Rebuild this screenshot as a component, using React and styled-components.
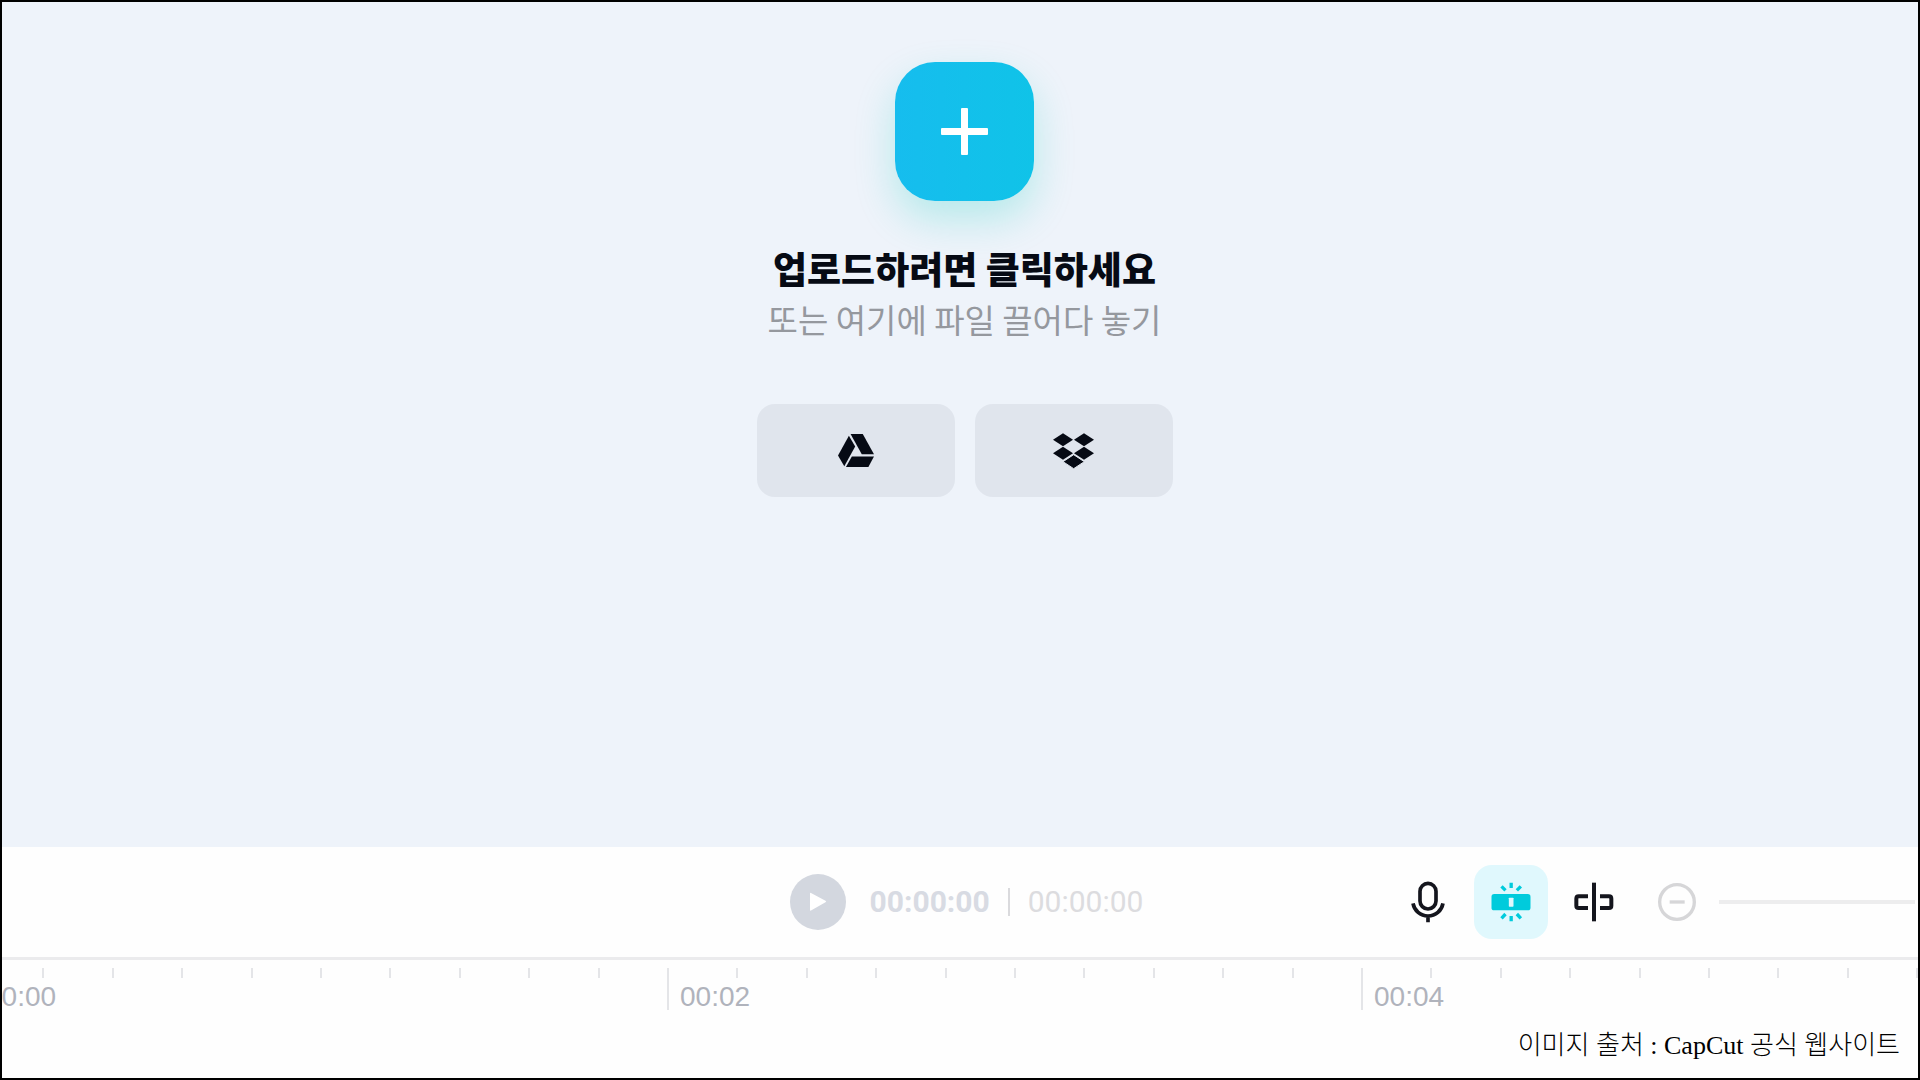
import React from "react";
import styled, { createGlobalStyle } from "styled-components";

const GlobalStyle = createGlobalStyle`
  *, *::before, *::after { box-sizing: border-box; }
  body { margin: 0; background: #fff; }
  button { border: 0; padding: 0; background: none; font: inherit; cursor: pointer; }
`;

const Editor = styled.div`
  display: flex;
  flex-direction: column;
  min-height: 100vh;
  border: 2px solid #000;
  background: #fefefe;
  overflow: hidden;
  font-family: "Liberation Sans", "Noto Sans CJK KR", sans-serif;
`;

const Stage = styled.main`
  flex: 1;
  display: flex;
  flex-direction: column;
  align-items: center;
  padding: 60px 0 60px 9px;
  background: #eef3fa;
`;

const UploadButton = styled.button`
  display: grid;
  place-items: center;
  width: 139px;
  height: 139px;
  border-radius: 40px;
  background: linear-gradient(90deg, #16bdee, #10c3e8);
  box-shadow: 0 18px 40px rgba(0, 205, 190, 0.24);
`;

const Title = styled.h1`
  margin: 39px 0 0;
  font: 900 37px/56px "Noto Sans CJK KR", sans-serif;
  color: #060a14;
`;

const Hint = styled.p`
  margin: 0;
  font: 400 33px/46px "Noto Sans CJK KR", sans-serif;
  color: #95989e;
`;

const Sources = styled.div`
  display: flex;
  gap: 20px;
  margin-top: 62px;
`;

const SourceButton = styled.button`
  display: grid;
  place-items: center;
  width: 198px;
  height: 93px;
  border-radius: 18px;
  background: #e0e5ed;
  color: #060a14;
`;

const Toolbar = styled.section`
  display: grid;
  grid-template-columns: 1fr auto 1fr;
  align-items: center;
  height: 113px;
  padding: 0 3px 0 16px;
  border-bottom: 3px solid #ebebed;
`;

const Player = styled.div`
  grid-column: 2;
  display: flex;
  align-items: center;
`;

const PlayButton = styled.button`
  display: grid;
  place-items: center;
  width: 56px;
  height: 56px;
  margin-right: 24px;
  border-radius: 50%;
  background: #d3d7df;
`;

const Time = styled.span`
  font: ${(p) => (p.$current ? 700 : 400)} 30px/36px Roboto, sans-serif;
  color: ${(p) => (p.$current ? "#d8dbe3" : "#dcdcdf")};
`;

const Separator = styled.span`
  width: 2px;
  height: 28px;
  margin: 0 18px;
  background: #dadadd;
`;

const Tools = styled.div`
  grid-column: 3;
  display: flex;
  justify-content: flex-end;
  align-items: center;
  gap: 9px;
`;

const ToolButton = styled.button`
  display: grid;
  place-items: center;
  width: 74px;
  height: 74px;
  border-radius: 18px;
  background: ${(p) => (p.$active ? "#e0f8fd" : "transparent")};
  color: ${(p) => p.$tone || "#14151d"};
`;

const ZoomControl = styled.div`
  display: flex;
  align-items: center;
  gap: 5px;
`;

const ZoomSlider = styled.input`
  appearance: none;
  width: 196px;
  height: 4px;
  margin: 0;
  background: #ededee;
  &::-webkit-slider-thumb { appearance: none; width: 0; height: 0; }
`;

const Ruler = styled.ol`
  display: flex;
  margin: 0 0 0 -29px;
  padding: 8px 0 0;
  list-style: none;
`;

const Segment = styled.li`
  display: flex;
  flex: none;
  width: 694px;
  height: 42px;
`;

const Division = styled.span`
  flex: 1 0 0;
  width: 0;
  height: ${(p) => (p.$major ? 42 : 10)}px;
  border-left: 2px solid #e4e5e8;
`;

const DivisionLabel = styled.span`
  display: block;
  padding: 13px 0 0 11px;
  font-size: 28px;
  line-height: 32px;
  white-space: nowrap;
  color: #b0b3bc;
`;

const Credit = styled.footer`
  padding: 18px 18px 14px;
  text-align: right;
  font: 300 26px/36px "Liberation Serif", "Noto Sans CJK KR", serif;
  color: #000;
`;

const PlusIcon = () => (
  <svg width="47" height="47" viewBox="0 0 47 47" fill="#fff" aria-hidden="true">
    <rect x="20" width="7" height="47" rx="1" />
    <rect y="20" width="47" height="7" rx="1" />
  </svg>
);

const DriveIcon = () => (
  <svg width="36" height="33" viewBox="293 132 109 100" fill="currentColor" aria-hidden="true">
    <path d="M326 137L345 170L312 230L293 197Z" />
    <path d="M331 132H368L402 193H365Z" />
    <path d="M335 200H402L385 232H317Z" />
  </svg>
);

const DropboxIcon = () => (
  <svg width="41" height="36" viewBox="938 133 123 108" fill="currentColor" aria-hidden="true">
    <path d="M968 134l30 19.500-30 19.500-30-19.500z" />
    <path d="M1031 134l30 19.500-30 19.500-30-19.500z" />
    <path d="M968 174l30 19.500-30 19.500-30-19.500z" />
    <path d="M1031 174l30 19.500-30 19.500-30-19.500z" />
    <path d="M1000 198l32 21-32 21-32-21z" stroke="#e0e5ed" strokeWidth="3" />
  </svg>
);

const PlayIcon = () => (
  <svg width="18" height="20" viewBox="0 0 18 20" aria-hidden="true">
    <path d="M1 1.500Q1 .5 2 1L16.500 8.700Q18 9.500 16.500 10.300L2 18.500Q1 19 1 18Z" fill="#fff" />
  </svg>
);

const MicIcon = () => (
  <svg width="36" height="42" viewBox="58 125 108 126" fill="none" stroke="currentColor" strokeWidth="11" aria-hidden="true">
    <rect x="88" y="132" width="48" height="77" rx="24" />
    <path d="M67 192C71 214 89 230 112 230S153 214 157 192M112 230V249" />
  </svg>
);

const SnapIcon = () => (
  <svg width="40" height="40" viewBox="301.500 125 120 120" aria-hidden="true">
    <rect x="303" y="161" width="117" height="49" rx="8" fill="currentColor" />
    <rect x="355" y="172" width="14" height="27" rx="2" fill="#e0f8fd" />
    <path
      d="M362 127V143M333 138L345 150M391 138L379 150M362 227V243M345 221L333 234M379 221L391 234"
      stroke="currentColor"
      strokeWidth="10"
    />
  </svg>
);

const SplitIcon = () => (
  <svg width="40" height="40" viewBox="552 125 120 120" fill="none" stroke="currentColor" strokeWidth="12" aria-hidden="true">
    <path d="M612 127V243" />
    <path d="M594 168H566Q559 168 559 175V196Q559 203 566 203H594" />
    <path d="M630 168H657Q664 168 664 175V196Q664 203 657 203H630" />
  </svg>
);

const MinusIcon = () => (
  <svg width="40" height="40" viewBox="51 125 120 120" fill="none" stroke="currentColor" strokeWidth="10" aria-hidden="true">
    <circle cx="111" cy="185" r="52" />
    <path d="M89 185H134" />
  </svg>
);

const segments = ["00:00", "00:02", "00:04"];
const minors = [1, 2, 3, 4, 5, 6, 7, 8, 9];

export default function App() {
  return (
    <Editor>
      <GlobalStyle />
      <Stage>
        <UploadButton type="button" aria-label="업로드">
          <PlusIcon />
        </UploadButton>
        <Title>업로드하려면 클릭하세요</Title>
        <Hint>또는 여기에 파일 끌어다 놓기</Hint>
        <Sources>
          <SourceButton type="button" aria-label="Google Drive">
            <DriveIcon />
          </SourceButton>
          <SourceButton type="button" aria-label="Dropbox">
            <DropboxIcon />
          </SourceButton>
        </Sources>
      </Stage>
      <Toolbar>
        <Player>
          <PlayButton type="button" aria-label="재생">
            <PlayIcon />
          </PlayButton>
          <Time $current>00:00:00</Time>
          <Separator />
          <Time>00:00:00</Time>
        </Player>
        <Tools>
          <ToolButton type="button" aria-label="녹음">
            <MicIcon />
          </ToolButton>
          <ToolButton type="button" aria-label="자동 맞춤" aria-pressed="true" $active $tone="#00cbdc">
            <SnapIcon />
          </ToolButton>
          <ToolButton type="button" aria-label="분할">
            <SplitIcon />
          </ToolButton>
          <ZoomControl>
            <ToolButton type="button" aria-label="축소" $tone="#d6d6d8">
              <MinusIcon />
            </ToolButton>
            <ZoomSlider type="range" aria-label="확대/축소" />
          </ZoomControl>
        </Tools>
      </Toolbar>
      <Ruler>
        {segments.map((label) => (
          <Segment key={label}>
            <Division $major>
              <DivisionLabel>{label}</DivisionLabel>
            </Division>
            {minors.map((n) => (
              <Division key={n} />
            ))}
          </Segment>
        ))}
      </Ruler>
      <Credit>이미지 출처 : CapCut 공식 웹사이트</Credit>
    </Editor>
  );
}
